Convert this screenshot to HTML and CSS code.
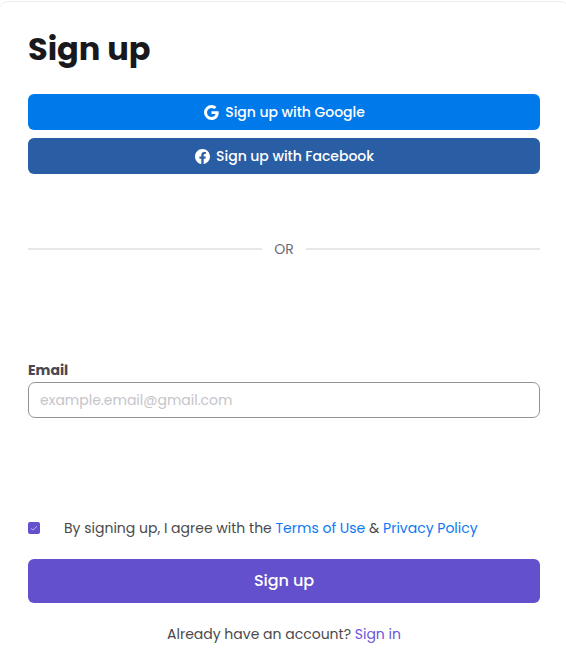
FILE: index.html
```
<!DOCTYPE html>
<html lang="en">
<head>
<meta charset="utf-8">
<title>Sign up</title>
<link rel="stylesheet" href="styles.css">
</head>
<body>
<main class="card">
  <h1 class="title">Sign up</h1>
  <div class="social">
    <button class="btn google" type="button">
      <svg class="icon" viewBox="0 0 16 16"><path d="M15.545 6.558a9.4 9.4 0 0 1 .139 1.626c0 2.434-.87 4.492-2.384 5.885h.002C11.978 15.292 10.158 16 8 16A8 8 0 1 1 8 0a7.7 7.7 0 0 1 5.352 2.082l-2.284 2.284A4.35 4.35 0 0 0 8 3.166c-2.087 0-3.86 1.408-4.492 3.304a4.8 4.8 0 0 0 0 3.063h.003c.635 1.893 2.405 3.301 4.492 3.301 1.078 0 2.004-.276 2.722-.764h-.003a3.7 3.7 0 0 0 1.599-2.431H8v-3.08z"/></svg>
      <span class="btn-text">Sign up with Google</span>
    </button>
    <button class="btn facebook" type="button">
      <svg class="icon" viewBox="0 0 16 16"><path d="M16 8.049c0-4.446-3.582-8.05-8-8.05C3.58 0-.002 3.603-.002 8.05c0 4.017 2.926 7.347 6.75 7.951v-5.625h-2.03V8.05H6.75V6.275c0-2.017 1.195-3.131 3.022-3.131.876 0 1.791.157 1.791.157v1.98h-1.009c-.993 0-1.303.621-1.303 1.258v1.51h2.218l-.354 2.326H9.25V16c3.824-.604 6.75-3.934 6.75-7.951"/></svg>
      <span class="btn-text">Sign up with Facebook</span>
    </button>
  </div>
  <div class="divider"><span>OR</span></div>
  <form class="form">
    <label class="label" for="email">Email</label>
    <input class="input" id="email" type="email" placeholder="example.email@gmail.com">
    <div class="agree">
      <span class="check"><svg viewBox="0 0 12 12"><path d="M3 6.3 5 8.1 9 4.2"/></svg></span>
      <p class="terms">By signing up, I agree with the <a href="#">Terms of Use</a> &amp; <a href="#">Privacy Policy</a></p>
    </div>
    <button class="btn submit" type="button"><span>Sign up</span></button>
  </form>
  <p class="signin">Already have an account? <a href="#">Sign in</a></p>
</main>
</body>
</html>
```
FILE: styles.css
```
* { box-sizing: border-box; }
body {
  margin: 0;
  background: #fff;
  overflow: hidden;
  font-family: Poppins, Inter, "Open Sans", sans-serif;
  font-size: 14px;
  line-height: 20px;
  color: #4a4a4c;
}
a { text-decoration: none; }
p { margin: 0; }
.card {
  width: 568px;
  height: 680px;
  margin-top: 1px;
  padding: 28px 28px 0;
  border-top: 1px solid #ebebed;
  border-radius: 8px;
}
.title {
  margin: 0 0 26px;
  font-size: 32px;
  line-height: 38px;
  font-weight: 700;
  color: #18181d;
}
.social { display: flex; flex-direction: column; gap: 8px; }
.btn {
  display: flex;
  align-items: center;
  justify-content: center;
  gap: 6px;
  width: 100%;
  height: 36px;
  padding: 0;
  border: 0;
  border-radius: 6px;
  color: #fff;
  font: 500 14px/20px Poppins, Inter, "Open Sans", sans-serif;
}
.social .btn { padding-left: 1px; }
.icon { width: 15px; height: 15px; fill: #fff; }
.google { background: #007aeb; }
.facebook { background: #295da4; }
.btn-text { letter-spacing: -0.04px; }
.divider {
  display: flex;
  align-items: center;
  gap: 12px;
  height: 20px;
  margin-top: 65px;
  color: #6d6c76;
}
.divider::before, .divider::after {
  content: "";
  flex: 1;
  height: 2px;
  background: #e7e7e9;
}
.form { margin-top: 101px; }
.label {
  display: block;
  height: 22px;
  font-weight: 700;
  color: #494851;
}
.input {
  display: block;
  width: 100%;
  height: 36px;
  padding: 0 11px;
  border: 1px solid #929197;
  border-radius: 7px;
  font: 400 14px/20px Poppins, Inter, "Open Sans", sans-serif;
}
.input::placeholder { color: #c5c4ca; opacity: 1; }
.agree {
  display: flex;
  align-items: center;
  gap: 24px;
  margin-top: 100px;
}
.check {
  width: 12px;
  height: 12px;
  border-radius: 2px;
  background: #6250cd;
}
.check svg { display: block; fill: none; stroke: #d4cff4; stroke-width: 0.8; }
.terms a { color: #0d78f5; }
.submit {
  height: 44px;
  margin-top: 21px;
  font-size: 16px;
  letter-spacing: -0.08px;
  background: #6350cc;
}
.signin { margin-top: 21px; text-align: center; }
.signin a { color: #6c56d8; }
```
